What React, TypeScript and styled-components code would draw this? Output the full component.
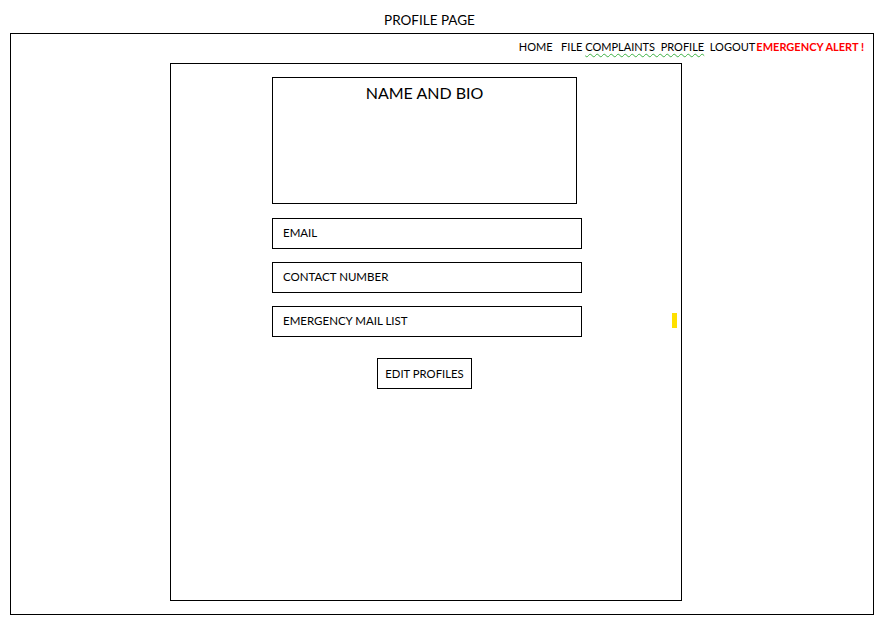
import React from "react";
import styled, { createGlobalStyle } from "styled-components";

const Global = createGlobalStyle`
  html, body { margin: 0; padding: 0; background: #fff; }
  body { font-family: Lato, "Open Sans", sans-serif; color: #000; }
`;

const Page = styled.div`
  width: 883px;
  height: 621px;
  display: flex;
  flex-direction: column;
`;

const Title = styled.div`
  height: 33px;
  box-sizing: border-box;
  padding: 12px 24px 0 0;
  text-align: center;
  font-size: 13.5px;
  line-height: 16px;
`;

const Frame = styled.div`
  margin: 0 9px 0 10px;
  height: 580px;
  border: 1px solid #000;
  display: flex;
  flex-direction: column;
`;

const Nav = styled.nav`
  height: 29px;
  box-sizing: border-box;
  padding: 5px 9px 0 0;
  display: flex;
  justify-content: flex-end;
  font-size: 11px;
  line-height: 16px;
  white-space: pre;
`;

const NavLink = styled.span<{ $spell?: boolean }>`
  text-decoration: ${(p) => (p.$spell ? "underline wavy #3cb043" : "none")};
  text-decoration-thickness: 1px;
  text-underline-offset: 2px;
`;

const Alert = styled.span`
  margin-left: 1px;
  color: #ff0000;
  font-weight: 700;
`;

const Panel = styled.div`
  position: relative;
  margin-left: 159px;
  width: 510px;
  height: 536px;
  border: 1px solid #000;
  display: flex;
  flex-direction: column;
  align-items: flex-start;
`;

const Content = styled.div`
  padding: 13px 0 0 101px;
  display: flex;
  flex-direction: column;
  align-items: flex-start;
`;

const BioBox = styled.div`
  width: 303px;
  height: 120px;
  border: 1px solid #000;
  text-align: center;
  font-size: 16px;
  line-height: 20px;
  padding-top: 5px;
  margin-bottom: 14px;
`;

const Field = styled.div`
  width: 308px;
  height: 29px;
  border: 1px solid #000;
  display: flex;
  align-items: center;
  font-size: 11.5px;
  margin-bottom: 13px;
`;

const FieldLabel = styled.span`
  padding-left: 10px;
  margin-top: -3px;
`;

const Button = styled.div`
  margin: 8px 0 0 105px;
  width: 93px;
  height: 29px;
  border: 1px solid #000;
  display: flex;
  align-items: center;
  justify-content: center;
  font-size: 11.3px;
`;

const ButtonLabel = styled.span`
  margin-top: -1px;
`;

const Marker = styled.div`
  position: absolute;
  left: 501px;
  top: 249px;
  width: 5px;
  height: 15px;
  background: #ffe000;
`;

export default function App() {
  return (
    <Page>
      <Global />
      <Title>PROFILE PAGE</Title>
      <Frame>
        <Nav>
          <NavLink>HOME</NavLink>
          <NavLink>{"   FILE "}</NavLink>
          <NavLink $spell>{"COMPLAINTS  PROFILE"}</NavLink>
          <NavLink>{"  LOGOUT"}</NavLink>
          <Alert>{"EMERGENCY ALERT !"}</Alert>
        </Nav>
        <Panel>
          <Content>
            <BioBox>NAME AND BIO</BioBox>
            <Field><FieldLabel>EMAIL</FieldLabel></Field>
            <Field><FieldLabel>CONTACT NUMBER</FieldLabel></Field>
            <Field><FieldLabel>EMERGENCY MAIL LIST</FieldLabel></Field>
            <Button><ButtonLabel>EDIT PROFILES</ButtonLabel></Button>
          </Content>
          <Marker />
        </Panel>
      </Frame>
    </Page>
  );
}
